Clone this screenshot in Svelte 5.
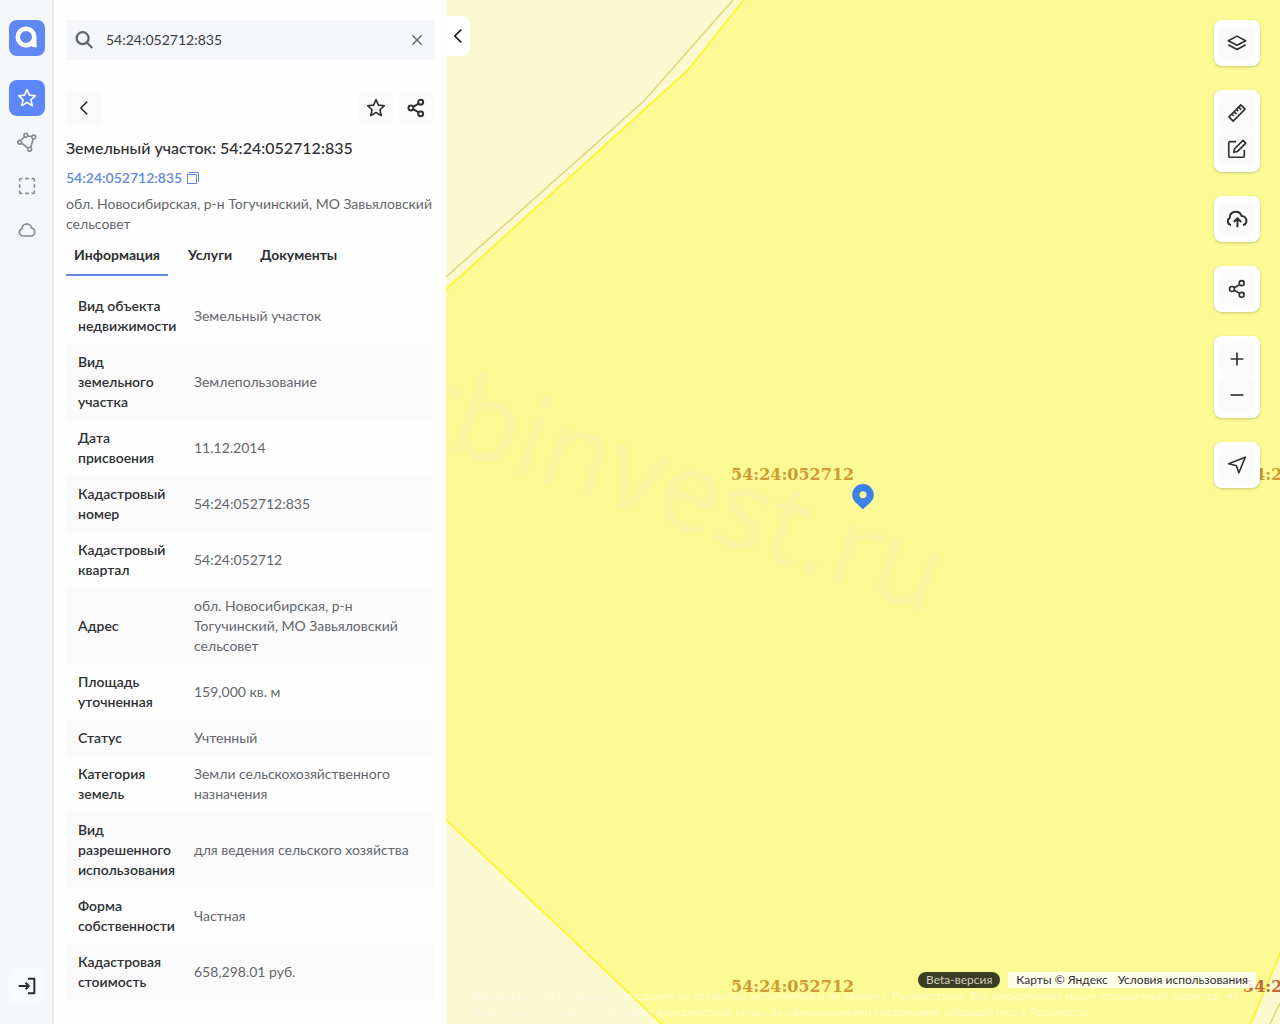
<script lang="ts">
	let query = '54:24:052712:835';
	let activeTab = 'Информация';

	const cadNumber = '54:24:052712:835';
	const tabs = ['Информация', 'Услуги', 'Документы'];

	const rows = [
		['Вид объекта недвижимости', 'Земельный участок'],
		['Вид земельного участка', 'Землепользование'],
		['Дата присвоения', '11.12.2014'],
		['Кадастровый номер', '54:24:052712:835'],
		['Кадастровый квартал', '54:24:052712'],
		['Адрес', 'обл. Новосибирская, р-н Тогучинский, МО Завьяловский сельсовет'],
		['Площадь уточненная', '159,000 кв. м'],
		['Статус', 'Учтенный'],
		['Категория земель', 'Земли сельскохозяйственного назначения'],
		['Вид разрешенного использования', 'для ведения сельского хозяйства'],
		['Форма собственности', 'Частная'],
		['Кадастровая стоимость', '658,298.01 руб.']
	];

	// every icon is drawn on a 24x24 grid
	const icons = {
		star: 'M12 2.8l2.7 6 6.5.7-4.9 4.4 1.4 6.4L12 17l-5.7 3.3 1.4-6.4-4.9-4.4 6.5-.7z',
		share: 'M9 10.7l5.800-3.500M9 13.300l5.800 3.500M9.200 12a2.700 2.700 0 1 1-5.400 0 2.700 2.700 0 0 1 5.400 0M19.800 5.600a2.700 2.700 0 1 1-5.400 0 2.700 2.700 0 0 1 5.400 0M19.800 18.400a2.700 2.700 0 1 1-5.400 0 2.700 2.700 0 0 1 5.400 0',
		nodes: 'M5.2 10.3l4-3.6M12.8 5.4l4.4.6M18.6 9l-2.4 8.8M6.2 13.4l7 5.2M6.2 12.3a2.1 2.1 0 1 1-4.2 0 2.1 2.1 0 0 1 4.2 0M12.8 4.7a2.1 2.1 0 1 1-4.2 0 2.1 2.1 0 0 1 4.2 0M21.4 6.6a2.1 2.1 0 1 1-4.2 0 2.1 2.1 0 0 1 4.2 0M17 19.8a2.1 2.1 0 1 1-4.2 0 2.1 2.1 0 0 1 4.2 0',
		area: 'M4 7V5a1 1 0 0 1 1-1h2M10 4h4M17 4h2a1 1 0 0 1 1 1v2M20 10v4M20 17v2a1 1 0 0 1-1 1h-2M14 20h-4M7 20H5a1 1 0 0 1-1-1v-2M4 14v-4',
		cloud: 'M7.5 18.5a4 4 0 0 1-1-7.800C6.300 7.500 8.500 5.500 11.500 5.500c2.800 0 4.800 1.700 5.400 4.300 2.200.4 3.500 2 3.500 4.300 0 2.500-1.900 4.400-4.400 4.400z',
		login: 'M3 12h11M10.500 8.500L14 12l-3.500 3.500M13 4h7v16h-7',
		layers: 'M12 4.500L2.500 9.500 12 14.500l9.500-5zM2.500 14L12 19l9.500-5',
		ruler: 'M16.200 3.200l4.600 4.600L7.800 20.800l-4.600-4.600zM6.300 13.100l2 2M8.800 10.600l2.800 2.800M11.300 8.100l2 2M13.800 5.600l2.800 2.800',
		edit: 'M11 4H4.500A1.500 1.500 0 0 0 3 5.500v14A1.500 1.500 0 0 0 4.500 21h14a1.500 1.500 0 0 0 1.500-1.500V13M18.500 2.600l3 3L12.400 14.800l-3.900.8.900-3.900z',
		upload: 'M5.500 18.500C1.500 17.800.8 12.500 4 11 3.800 7 6.500 4 10.500 4c3.300 0 5.700 1.800 6.500 4.800 3 .1 5.300 2.200 5.300 5 0 2.300-1.400 4.200-3.800 4.700M12.500 21v-9.500M8.500 15.200l4-4 4 4',
		plus: 'M12 5v14M5 12h14',
		minus: 'M5 12h14',
		locate: 'M21 3.500L14 20.500l-2.600-7.700L3 10.600z',
		back: 'M15.500 5L8.500 12l7 7',
		close: 'M5 5l14 14M19 5L5 19'
	};

	const sideLinks = [
		{ label: 'Избранное', icon: icons.star, active: true },
		{ label: 'Границы', icon: icons.nodes, active: false },
		{ label: 'Область', icon: icons.area, active: false },
		{ label: 'Погода', icon: icons.cloud, active: false }
	];

	const toolGroups = [
		[{ label: 'Слои', icon: icons.layers }],
		[
			{ label: 'Линейка', icon: icons.ruler },
			{ label: 'Рисование', icon: icons.edit }
		],
		[{ label: 'Загрузить', icon: icons.upload, bold: true }],
		[{ label: 'Поделиться', icon: icons.share }],
		[
			{ label: 'Приблизить', icon: icons.plus },
			{ label: 'Отдалить', icon: icons.minus }
		],
		[{ label: 'Моё местоположение', icon: icons.locate }]
	];
</script>

<div class="app">
	<nav class="sidebar">
		<a class="side-item logo" href="/" aria-label="Главная">
			<svg viewBox="0 0 36 36">
				<path
					d="M17 6.500a10.500 10.500 0 0 0 0 21c2 0 3.800-.5 5.500-1.500.8 1.300 2.800 1.500 5.500 1.300-.5-1.800-.5-3-.5-5V17A10.500 10.500 0 0 0 17 6.500zm0 4.500a6 6 0 1 1 0 12 6 6 0 0 1 0-12z"
					fill="#fff"
					fill-rule="evenodd"
				/>
			</svg>
		</a>
		<div class="side-links">
			{#each sideLinks as link}
				<button class="side-item" class:active={link.active} aria-label={link.label}>
					<svg class="icon" viewBox="0 0 24 24"><path d={link.icon} /></svg>
				</button>
			{/each}
		</div>
		<button class="side-item login" aria-label="Войти">
			<svg class="icon bold" viewBox="0 0 24 24"><path d={icons.login} /></svg>
		</button>
	</nav>

	<main class="panel">
		<div class="search">
			<svg class="icon search-icon" viewBox="0 0 24 24">
				<path d="M17 10a6.500 6.500 0 1 1-13 0 6.500 6.500 0 0 1 13 0M15 14.800l6 6" />
			</svg>
			<input type="text" bind:value={query} aria-label="Поиск" autocomplete="off" />
			<button class="clear" on:click={() => (query = '')} aria-label="Очистить">
				<svg viewBox="0 0 24 24"><path d={icons.close} /></svg>
			</button>
		</div>

		<div class="actions">
			<button class="square" aria-label="Назад">
				<svg class="icon" viewBox="0 0 24 24"><path d={icons.back} /></svg>
			</button>
			<div class="actions-right">
				<button class="square" aria-label="В избранное">
					<svg class="icon" viewBox="0 0 24 24"><path d={icons.star} /></svg>
				</button>
				<button class="square" aria-label="Поделиться">
					<svg class="icon bold" viewBox="0 0 24 24"><path d={icons.share} /></svg>
				</button>
			</div>
		</div>

		<h1>Земельный участок: {cadNumber}</h1>
		<a class="cad-link" href="#{cadNumber}">
			{cadNumber}
			<svg viewBox="0 0 14 14"><path d="M1.500 3.500h9v9h-9zM3 1.500h9.500V11" /></svg>
		</a>
		<p class="address">обл. Новосибирская, р-н Тогучинский, МО Завьяловский сельсовет</p>

		<div class="tabs" role="tablist">
			{#each tabs as tab}
				<button
					role="tab"
					aria-selected={activeTab === tab}
					class:current={activeTab === tab}
					on:click={() => (activeTab = tab)}>{tab}</button
				>
			{/each}
		</div>

		<table>
			<tbody>
				{#each rows as [name, value]}
					<tr>
						<th scope="row">{name}</th>
						<td>{value}</td>
					</tr>
				{/each}
			</tbody>
		</table>
	</main>

	<section class="map">
		<svg class="canvas" viewBox="0 0 834 1024" preserveAspectRatio="xMinYMin slice">
			<rect width="834" height="1024" fill="#fcf8cf" />
			<path d="M0 277L198 101 287 0" class="quarter" />
			<path d="M834 1003L824 1024" class="quarter" />
			<path
				d="M-4 293L242 70 304 -8H844V930L802 1030H222L-4 816z"
				fill="#fcfa95"
				stroke="#faf73c"
				stroke-width="2"
			/>
			<text class="watermark" x="483" y="614" transform="rotate(19 483 614)">arbinvest.ru</text>
			<text class="label" x="285" y="480">54:24:052712</text>
			<text class="label" x="285" y="992">54:24:052712</text>
			<text class="label" x="797" y="480">54:24:052712</text>
			<text class="label red" x="797" y="992">54:24:052712</text>
			<path
				d="M417 484a10.800 10.800 0 0 0-10.800 10.800c0 3.200 1.300 5.600 3.400 7.700l7.400 6.800 7.400-6.800c2.100-2.100 3.400-4.500 3.400-7.700A10.800 10.800 0 0 0 417 484zm0 7.200a3.500 3.500 0 1 1 0 7 3.500 3.500 0 0 1 0-7z"
				fill="#3d80ec"
			/>
		</svg>

		<button class="collapse" aria-label="Свернуть панель">
			<svg class="icon" viewBox="0 0 24 24"><path d={icons.back} /></svg>
		</button>

		<div class="tools">
			{#each toolGroups as group}
				<div class="tool-group">
					{#each group as tool}
						<button class="square" aria-label={tool.label}>
							<svg class="icon" class:bold={tool.bold} viewBox="0 0 24 24"><path d={tool.icon} /></svg>
						</button>
					{/each}
				</div>
			{/each}
		</div>

		<footer>
			<div class="credits">
				<span class="beta">Beta-версия</span>
				<div class="copyright">
					<a href="https://yandex.ru/maps">Карты © Яндекс</a>
					<a href="https://yandex.ru/legal/maps_termsofuse">Условия использования</a>
				</div>
			</div>
			<p class="disclaimer">
				Данный ресурс использует сведения из открытых источников и не связан с Росреестром. Вся информация носит справочный характер, не
				гарантирует точность и не имеет юридической силы. За официальными сведениями обращайтесь в Росреестр.
			</p>
		</footer>
	</section>
</div>

<style>
	:global(body) {
		margin: 0;
	}

	.app {
		display: flex;
		min-height: 100vh;
		background: #fefefe;
		color: #2e3033;
		font-family: Lato, 'Noto Sans', sans-serif;
		font-size: 14px;
		line-height: 20px;
	}

	button {
		padding: 0;
		border: none;
		background: none;
		color: inherit;
		font: inherit;
		cursor: pointer;
	}

	a {
		color: inherit;
		text-decoration: none;
	}

	.icon {
		flex-shrink: 0;
		width: 22px;
		height: 22px;
		fill: none;
		stroke: currentColor;
		stroke-width: 1.8;
		stroke-linejoin: round;
	}

	.icon.bold {
		stroke-width: 2.2;
	}

	.sidebar {
		display: flex;
		flex-direction: column;
		flex-shrink: 0;
		box-sizing: border-box;
		width: 54px;
		padding: 20px 8px 20px 9px;
		border-right: 2px solid #e8edf2;
		background: #f4f8fa;
	}

	.side-item {
		display: flex;
		align-items: center;
		justify-content: center;
		width: 36px;
		height: 36px;
		border-radius: 8px;
		color: #868c93;
	}

	.side-item.logo {
		background: #5f88f2;
	}

	.side-item.active {
		background: #5c86fa;
		color: #fff;
	}

	.side-item.login {
		margin-top: auto;
		background: #f9fafb;
		color: #2a2c2e;
	}

	.side-links {
		display: flex;
		flex-direction: column;
		gap: 8px;
		margin-top: 24px;
	}

	.panel {
		flex-shrink: 0;
		box-sizing: border-box;
		width: 392px;
		padding: 20px 12px;
	}

	.search {
		display: flex;
		align-items: center;
		height: 40px;
		padding: 0 8px 0 7px;
		background: #f5f7fb;
	}

	.search-icon {
		stroke: #5f6368;
		stroke-width: 2.4;
	}

	.search input {
		flex: 1;
		min-width: 0;
		padding: 0 11px;
		border: none;
		outline: none;
		background: none;
		color: #3a3d42;
		font: inherit;
	}

	.clear {
		display: flex;
		padding: 1px;
	}

	.clear svg {
		width: 16px;
		height: 16px;
		fill: none;
		stroke: #606469;
		stroke-width: 2;
	}

	.actions {
		display: flex;
		justify-content: space-between;
		margin: 30px 0 12px;
	}

	.actions-right {
		display: flex;
		gap: 4px;
	}

	.square {
		display: flex;
		align-items: center;
		justify-content: center;
		width: 36px;
		height: 36px;
		border-radius: 8px;
		background: #fbfbfb;
	}

	h1 {
		margin: 0;
		font-size: 16px;
		font-weight: 500;
		line-height: 20px;
	}

	.cad-link {
		display: flex;
		align-items: center;
		gap: 4px;
		margin: 10px 0 6px;
		color: #6089e4;
		font-weight: 600;
	}

	.cad-link svg {
		width: 14px;
		height: 14px;
		fill: none;
		stroke: currentColor;
	}

	.address {
		margin: 0;
		color: #64676b;
	}

	.tabs {
		display: flex;
		gap: 12px;
		margin: 2px 0 12px;
	}

	.tabs button {
		height: 40px;
		padding: 0 8px;
		border-bottom: 2px solid transparent;
		font-weight: 700;
	}

	.tabs .current {
		border-color: #6089e4;
	}

	table {
		width: 100%;
		border-collapse: collapse;
		table-layout: fixed;
	}

	tr:nth-child(even) {
		background: #fafafb;
	}

	th,
	td {
		padding: 8px 12px;
		text-align: left;
	}

	th {
		width: 100px;
		padding-right: 4px;
		font-weight: 600;
	}

	td {
		color: #64676b;
	}

	.map {
		position: relative;
		display: flex;
		flex: 1;
		flex-direction: column;
		justify-content: flex-end;
		min-width: 0;
		overflow: hidden;
		background: #fcfa95;
	}

	.canvas {
		position: absolute;
		top: 0;
		left: 0;
		width: 100%;
		height: 100%;
	}

	.quarter {
		fill: none;
		stroke: #e0d57c;
		stroke-width: 1.5;
	}

	.label {
		fill: #cf9a36;
		font-family: 'DejaVu Serif', serif;
		font-size: 16px;
		font-weight: 700;
	}

	.label.red {
		fill: #c4683a;
	}

	.watermark {
		fill: #fcf6a3;
		font-family: 'Open Sans', sans-serif;
		font-size: 110px;
		text-anchor: end;
	}

	.collapse {
		position: absolute;
		top: 16px;
		left: 0;
		display: flex;
		align-items: center;
		justify-content: center;
		width: 24px;
		height: 40px;
		border-radius: 0 8px 8px 0;
		background: #fff;
		color: #111;
	}

	.tools {
		position: absolute;
		top: 20px;
		right: 20px;
		display: flex;
		flex-direction: column;
		gap: 24px;
	}

	.tool-group {
		padding: 5px;
		border-radius: 8px;
		background: #fff;
		box-shadow: 0 1px 3px rgba(0, 0, 0, 0.2);
	}

	footer {
		position: relative;
		padding: 0 24px 4px;
		font-size: 12px;
		line-height: 16px;
	}

	.credits {
		display: flex;
		justify-content: flex-end;
		gap: 8px;
	}

	.beta {
		padding: 0 8px;
		border-radius: 8px;
		background: #3d3d26;
		color: #cfcfb8;
	}

	.copyright {
		display: flex;
		gap: 10px;
		padding: 0 8px;
		border-radius: 3px;
		background: rgba(255, 255, 255, 0.8);
	}

	.disclaimer {
		margin: 0;
		color: rgba(255, 255, 255, 0.45);
	}
</style>
